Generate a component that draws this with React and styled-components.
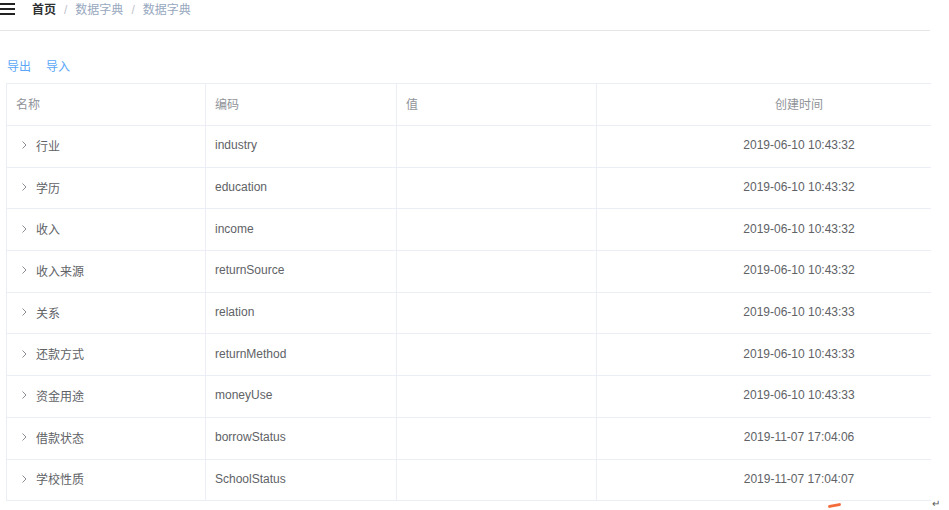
import React from "react";
import styled, { createGlobalStyle } from "styled-components";

const Global = createGlobalStyle`
  html, body { margin: 0; padding: 0; background: #fff; }
  body { font-family: "Liberation Sans", Arial, "Noto Sans CJK SC", sans-serif; overflow: hidden; }
`;

const Page = styled.div`
  width: 949px;
  height: 510px;
  position: relative;
  overflow: hidden;
`;

const NavBar = styled.div`
  width: 930px;
  height: 30px;
  border-bottom: 1px solid #e6e6e6;
  display: flex;
  align-items: flex-start;
`;

const Hamburger = styled.div`
  width: 15px;
  margin-top: 3px;
  display: flex;
  flex-direction: column;
  gap: 3px;
  span { display: block; height: 2px; background: #222; }
`;

const Crumbs = styled.div`
  margin-left: 17px;
  margin-top: 3px;
  display: flex;
  align-items: center;
  font-size: 12px;
  line-height: 14px;
`;

const Crumb = styled.span`
  color: ${(p) => (p.$home ? "#303133" : "#97a8be")};
  font-weight: ${(p) => (p.$home ? 700 : 400)};
`;

const Sep = styled.span`
  color: #c0c4cc;
  margin: 0 8px;
`;

const Toolbar = styled.div`
  display: flex;
  gap: 15px;
  padding: 29px 0 0 7px;
`;

const LinkBtn = styled.span`
  color: #5aa7f7;
  font-size: 12px;
  line-height: 14px;
`;

const TableWrap = styled.div`
  margin-left: 6px;
  margin-top: 9px;
  width: 924px;
  overflow: hidden;
  border-top: 1px solid #ebeef5;
  border-left: 1px solid #ebeef5;
`;

const Row = styled.div`
  display: grid;
  grid-template-columns: 199px 191px 200px 404px;
  height: ${(p) => (p.$head ? "41px" : "40.7px")};
  border-bottom: 1px solid #ebeef5;
  width: 994px;
`;

const Cell = styled.div`
  display: flex;
  align-items: center;
  justify-content: ${(p) => (p.$center ? "center" : "flex-start")};
  padding-left: ${(p) => (p.$center ? "0" : "9px")};
  padding-bottom: 2px;
  box-sizing: border-box;
  border-right: 1px solid #ebeef5;
  font-size: 12px;
  color: ${(p) => (p.$head ? "#909399" : "#606266")};
  white-space: nowrap;
  &:last-child { border-right: none; }
`;

const Chevron = styled.svg`
  width: 8px;
  height: 8px;
  margin: 0 8px 0 4px;
  flex-shrink: 0;
`;

const Mark = styled.div`
  position: absolute;
  left: 828px;
  top: 504px;
  width: 13px;
  height: 3px;
  background: #f56c3c;
  border-radius: 2px;
  transform: rotate(-10deg);
`;

const Return = styled.span`
  position: absolute;
  left: 932px;
  top: 498px;
  font-size: 10px;
  color: #555;
`;

const rows = [
  ["行业", "industry", "2019-06-10 10:43:32"],
  ["学历", "education", "2019-06-10 10:43:32"],
  ["收入", "income", "2019-06-10 10:43:32"],
  ["收入来源", "returnSource", "2019-06-10 10:43:32"],
  ["关系", "relation", "2019-06-10 10:43:33"],
  ["还款方式", "returnMethod", "2019-06-10 10:43:33"],
  ["资金用途", "moneyUse", "2019-06-10 10:43:33"],
  ["借款状态", "borrowStatus", "2019-11-07 17:04:06"],
  ["学校性质", "SchoolStatus", "2019-11-07 17:04:07"],
];

export default function App() {
  return (
    <Page>
      <Global />
      <NavBar>
        <Hamburger>
          <span />
          <span />
          <span />
        </Hamburger>
        <Crumbs>
          <Crumb $home>首页</Crumb>
          <Sep>/</Sep>
          <Crumb>数据字典</Crumb>
          <Sep>/</Sep>
          <Crumb>数据字典</Crumb>
        </Crumbs>
      </NavBar>
      <Toolbar>
        <LinkBtn>导出</LinkBtn>
        <LinkBtn>导入</LinkBtn>
      </Toolbar>
      <TableWrap>
        <Row $head>
          <Cell $head>名称</Cell>
          <Cell $head>编码</Cell>
          <Cell $head>值</Cell>
          <Cell $head $center>创建时间</Cell>
        </Row>
        {rows.map(([name, code, time]) => (
          <Row key={code}>
            <Cell>
              <Chevron viewBox="0 0 8 8">
                <path d="M2.5 0.5 L6 4 L2.5 7.5" fill="none" stroke="#8a8d93" strokeWidth="1" />
              </Chevron>
              {name}
            </Cell>
            <Cell>{code}</Cell>
            <Cell />
            <Cell $center>{time}</Cell>
          </Row>
        ))}
      </TableWrap>
      <Mark />
      <Return>↵</Return>
    </Page>
  );
}
